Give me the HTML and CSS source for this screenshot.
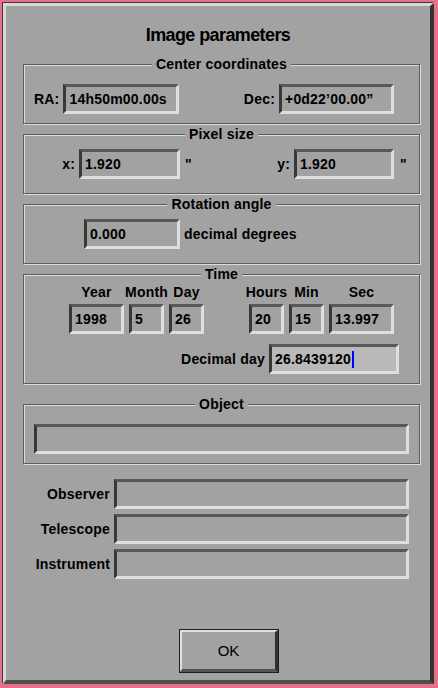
FILE: index.html
```html
<!DOCTYPE html>
<html>
<head>
<meta charset="utf-8">
<title>Image parameters</title>
<link rel="stylesheet" href="styles.css">
</head>
<body>
<div class="window">
  <div class="title">Image parameters</div>

  <div class="group g-center">
    <div class="legend">Center coordinates</div>
    <div class="row row-center">
      <span class="lbl">RA:</span>
      <div class="field w-ra">14h50m00.00s</div>
      <span class="lbl push">Dec:</span>
      <div class="field w-dec">+0d22’00.00”</div>
    </div>
  </div>

  <div class="group g-pixel">
    <div class="legend">Pixel size</div>
    <div class="row row-pixel">
      <span class="lbl lbl-x">x:</span>
      <div class="field w-px">1.920</div>
      <span class="unit">"</span>
      <span class="lbl lbl-y">y:</span>
      <div class="field w-py">1.920</div>
      <span class="unit unit-y">"</span>
    </div>
  </div>

  <div class="group g-rot">
    <div class="legend">Rotation angle</div>
    <div class="row row-rot">
      <div class="field w-rot">0.000</div>
      <span class="after">decimal degrees</span>
    </div>
  </div>

  <div class="group g-time">
    <div class="legend">Time</div>
    <div class="row row-time">
      <div class="col w-year"><span class="hdr">Year</span><div class="field">1998</div></div>
      <div class="col w-sm"><span class="hdr">Month</span><div class="field">5</div></div>
      <div class="col w-sm"><span class="hdr">Day</span><div class="field">26</div></div>
      <div class="col w-sm col-hours"><span class="hdr">Hours</span><div class="field">20</div></div>
      <div class="col w-sm"><span class="hdr">Min</span><div class="field">15</div></div>
      <div class="col w-sec"><span class="hdr">Sec</span><div class="field">13.997</div></div>
    </div>
    <div class="row row-decimal">
      <span class="lbl">Decimal day</span>
      <div class="field field-focus w-dec-day">26.8439120<span class="cursor"></span></div>
    </div>
  </div>

  <div class="group g-object">
    <div class="legend">Object</div>
    <div class="row row-object">
      <div class="field w-object"></div>
    </div>
  </div>

  <div class="meta">
    <div class="meta-row"><span class="meta-lbl">Observer</span><div class="field w-meta"></div></div>
    <div class="meta-row"><span class="meta-lbl">Telescope</span><div class="field w-meta"></div></div>
    <div class="meta-row"><span class="meta-lbl">Instrument</span><div class="field w-meta"></div></div>
  </div>

  <div class="ok-btn">OK</div>
</div>
</body>
</html>
```

FILE: styles.css
```css
html, body {
  margin: 0;
  padding: 0;
}

body {
  background: #e8708a;
  width: 438px;
  height: 688px;
  overflow: hidden;
  font-family: "Liberation Sans", Arial, sans-serif;
  font-weight: bold;
  font-size: 14px;
  letter-spacing: 0.2px;
  color: #000;
}

.window {
  box-sizing: border-box;
  margin: 3px 0 0 3px;
  width: 431px;
  height: 681px;
  background: #a2a2a2;
  border-style: solid;
  border-width: 3px 4px 4px 3px;
  border-color: #d9d9d9 #333333 #4f4f4f #d9d9d9;
  box-shadow: -1px -1px 0 #3a3a3a;
  display: flex;
  flex-direction: column;
  align-items: flex-start;
}

.title {
  align-self: stretch;
  margin-top: 19px;
  height: 20px;
  line-height: 20px;
  text-align: center;
  font-size: 18px;
  letter-spacing: -0.6px;
}

/* etched group frame */
.group {
  box-sizing: border-box;
  margin-left: 17px;
  width: 397px;
  border: 1px solid #5c5c5c;
  box-shadow: inset 1px 1px 0 #dcdcdc, 1px 1px 0 #dcdcdc;
  display: flex;
  flex-direction: column;
}

.legend {
  align-self: center;
  margin-top: -9px;
  height: 16px;
  line-height: 16px;
  padding: 0 4px;
  background: #a2a2a2;
  white-space: nowrap;
}

.g-center { margin-top: 19px; height: 60px; }
.g-pixel  { margin-top: 10px; height: 60px; }
.g-rot    { margin-top: 10px; height: 60px; }
.g-time   { margin-top: 10px; height: 110px; }
.g-object { margin-top: 20px; height: 60px; }

.row {
  display: flex;
  align-items: center;
  line-height: 16px;
  white-space: nowrap;
}

/* sunken entry */
.field {
  box-sizing: border-box;
  height: 30px;
  border-style: solid;
  border-width: 3px;
  border-color: #585858 #dedede #dedede #383838;
  padding-left: 3px;
  display: flex;
  align-items: center;
  line-height: 16px;
  white-space: nowrap;
  overflow: hidden;
  background: #a2a2a2;
}

.lbl { margin-right: 4px; }
.push { margin-left: auto; }

/* Center coordinates */
.row-center {
  margin-top: 12px;
  padding: 0 25px 0 10px;
}
.w-ra  { width: 116px; }
.w-dec { width: 115px; }

/* Pixel size */
.row-pixel {
  margin-top: 7px;
  padding-right: 11px;
}
.lbl-x { width: 51px; text-align: right; margin-right: 4px; }
.lbl-y { flex: 1; text-align: right; margin-right: 4px; }
.w-px { width: 101px; }
.w-py { width: 100px; }
.unit { width: 8px; margin-left: 5px; }
.unit-y { margin-left: 6px; }

/* Rotation angle */
.row-rot {
  margin-top: 7px;
  padding-left: 60px;
}
.w-rot { width: 96px; }
.after { margin-left: 4px; }

/* Time */
.row-time {
  margin-top: 2px;
  padding-left: 45px;
  align-items: flex-start;
  gap: 5px;
}
.col {
  display: flex;
  flex-direction: column;
  align-items: center;
  gap: 4px;
}
.col .field { align-self: stretch; }
.hdr {
  height: 16px;
  line-height: 16px;
  white-space: nowrap;
}
.w-year { width: 55px; }
.w-sm   { width: 35px; }
.w-sec  { width: 65px; }
.col-hours { margin-left: 40px; }

.row-decimal {
  margin-top: 10px;
  justify-content: flex-end;
  padding-right: 20px;
}
.w-dec-day { width: 130px; }
.field-focus { background: #b9b9b9; }
.cursor {
  display: inline-block;
  width: 2px;
  height: 17px;
  margin-left: 1px;
  background: #0000ff;
}

/* Object */
.row-object {
  margin-top: 12px;
  padding: 0 10px;
}
.w-object { width: 375px; }

/* Observer / Telescope / Instrument */
.meta {
  margin-top: 15px;
  margin-left: 17px;
  display: flex;
  flex-direction: column;
  gap: 5px;
}
.meta-row {
  display: flex;
  align-items: center;
  line-height: 16px;
}
.meta-lbl {
  width: 87px;
  text-align: right;
  margin-right: 4px;
  white-space: nowrap;
}
.w-meta { width: 295px; }

/* OK button */
.ok-btn {
  box-sizing: border-box;
  margin-top: 51px;
  margin-left: 174px;
  width: 98px;
  height: 42px;
  border-style: solid;
  border-width: 2px 3px 3px 2px;
  border-color: #e0e0e0 #303030 #555555 #e0e0e0;
  box-shadow: 0 0 0 1px #1e1e1e;
  display: flex;
  align-items: center;
  justify-content: center;
  font-weight: normal;
  font-size: 15px;
  letter-spacing: 0;
}
```
